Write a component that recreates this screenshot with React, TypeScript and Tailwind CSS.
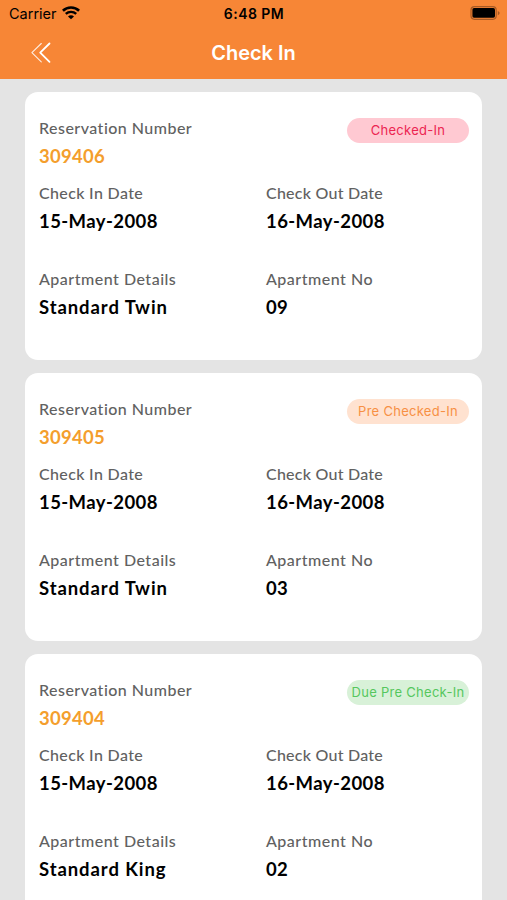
import { FC } from "react";

type Reservation = {
  id: string;
  status: string;
  statusStyle: string;
  checkIn: string;
  checkOut: string;
  details: string;
  apartment: string;
};

const reservations: Reservation[] = [
  {
    id: "309406",
    status: "Checked-In",
    statusStyle: "bg-[#ffc9d2] text-[#ec2551]",
    checkIn: "15-May-2008",
    checkOut: "16-May-2008",
    details: "Standard Twin",
    apartment: "09",
  },
  {
    id: "309405",
    status: "Pre Checked-In",
    statusStyle: "bg-[#ffe2d0] text-[#f79044]",
    checkIn: "15-May-2008",
    checkOut: "16-May-2008",
    details: "Standard Twin",
    apartment: "03",
  },
  {
    id: "309404",
    status: "Due Pre Check-In",
    statusStyle: "bg-[#d8f1d8] text-[#55c75e]",
    checkIn: "15-May-2008",
    checkOut: "16-May-2008",
    details: "Standard King",
    apartment: "02",
  },
];

type FieldProps = {
  label: string;
  value: string;
  labelStyle?: string;
  valueStyle?: string;
};

const Field: FC<FieldProps> = ({
  label,
  value,
  labelStyle = "tracking-[0.35px]",
  valueStyle = "text-black tracking-[0.42px]",
}) => {
  return (
    <div className="whitespace-nowrap">
      <p
        className={`h-7 text-[16px] font-medium leading-7 text-[#616161] ${labelStyle}`}
      >
        {label}
      </p>
      <p
        className={`h-[27px] pt-px text-[18.5px] font-bold leading-[27px] ${valueStyle}`}
      >
        {value}
      </p>
    </div>
  );
};

const Card: FC<{ item: Reservation }> = ({ item }) => {
  return (
    <div className="h-[268px] shrink-0 rounded-[13px] bg-white pl-[14px] pr-[13px] pt-[22px] font-['Lato',sans-serif]">
      <div className="flex items-start justify-between">
        <Field
          label="Reservation Number"
          value={item.id}
          labelStyle="tracking-[0.47px]"
          valueStyle="text-[#f49e2c] tracking-[0.25px]"
        />
        <div
          className={`mt-1 h-[25px] w-[122px] whitespace-nowrap rounded-full text-center font-['Inter',sans-serif] text-[13px] leading-[25px] tracking-[0.28px] ${item.statusStyle}`}
        >
          {item.status}
        </div>
      </div>
      <div className="mt-[10px] grid grid-cols-[227px_1fr] gap-y-[31px]">
        <Field label="Check In Date" value={item.checkIn} />
        <Field
          label="Check Out Date"
          value={item.checkOut}
          labelStyle="tracking-[0.25px]"
        />
        <Field
          label="Apartment Details"
          value={item.details}
          labelStyle="tracking-[0.5px]"
          valueStyle="text-black tracking-[0.92px]"
        />
        <Field
          label="Apartment No"
          value={item.apartment}
          labelStyle="tracking-[0.5px]"
          valueStyle="text-black tracking-[0.3px]"
        />
      </div>
    </div>
  );
};

const StatusBar = () => {
  return (
    <div className="grid h-[27px] grid-cols-3 items-center pl-[9px] pr-[7px] text-black">
      <div className="flex items-center gap-[5px]">
        <span className="text-[14.5px] leading-[27px]">Carrier</span>
        <svg
          className="-mt-[2px]"
          width="18"
          height="14"
          viewBox="0 0 18 14"
          fill="none"
        >
          <path
            d="M.9 4.7C5.3.4 12.7.4 17.1 4.7"
            stroke="currentColor"
            strokeWidth="2.7"
          />
          <path
            d="M3.8 7.9C6.7 5.2 11.3 5.2 14.2 7.9"
            stroke="currentColor"
            strokeWidth="2.4"
          />
          <path
            d="M9 13.3 6 10.4C7.7 8.9 10.3 8.9 12 10.4Z"
            fill="currentColor"
          />
        </svg>
      </div>
      <span className="-ml-px text-center text-[14px] font-semibold leading-[27px] tracking-[0.45px]">
        6:48 PM
      </span>
      <svg
        className="-mt-px justify-self-end"
        width="30"
        height="14"
        viewBox="0 0 30 14"
        fill="none"
      >
        <rect
          x="1"
          y="0.7"
          width="25.2"
          height="12.6"
          rx="3.5"
          stroke="#a85a24"
          strokeWidth="1.2"
        />
        <rect x="2.4" y="2.1" width="22.6" height="9.6" rx="1.6" fill="#000" />
        <path
          d="M27.8 5v4.2c1.1-.5 1.8-1.2 1.8-2.1s-.7-1.6-1.8-2.1Z"
          fill="#a85a24"
        />
      </svg>
    </div>
  );
};

const Header = () => {
  return (
    <div className="h-[79px] shrink-0 bg-[#f78636] font-['Inter',sans-serif]">
      <StatusBar />
      <div className="grid h-[51px] grid-cols-[80px_1fr_80px] items-center text-white">
        <svg
          className="ml-[31px] cursor-pointer"
          width="20"
          height="22"
          viewBox="0 0 20 22"
          fill="none"
          stroke="currentColor"
          strokeLinecap="round"
          strokeLinejoin="round"
        >
          <path d="M10.3 1.5.9 10.7l9.4 9.2" strokeWidth="1.1" opacity="0.85" />
          <path d="M18.5 1.5 9.2 10.7l9.3 9.2" strokeWidth="1.8" />
        </svg>
        <h1 className="text-center text-[20px] font-semibold">Check In</h1>
      </div>
    </div>
  );
};

const App = () => {
  return (
    <div className="flex h-[900px] w-[507px] flex-col overflow-hidden bg-[#e4e4e4]">
      <Header />
      <div className="flex min-h-0 flex-1 flex-col gap-[13px] overflow-hidden pl-[25px] pr-[25px] pt-[13px]">
        {reservations.map((item) => (
          <Card key={item.id} item={item} />
        ))}
      </div>
    </div>
  );
};

export default App;
